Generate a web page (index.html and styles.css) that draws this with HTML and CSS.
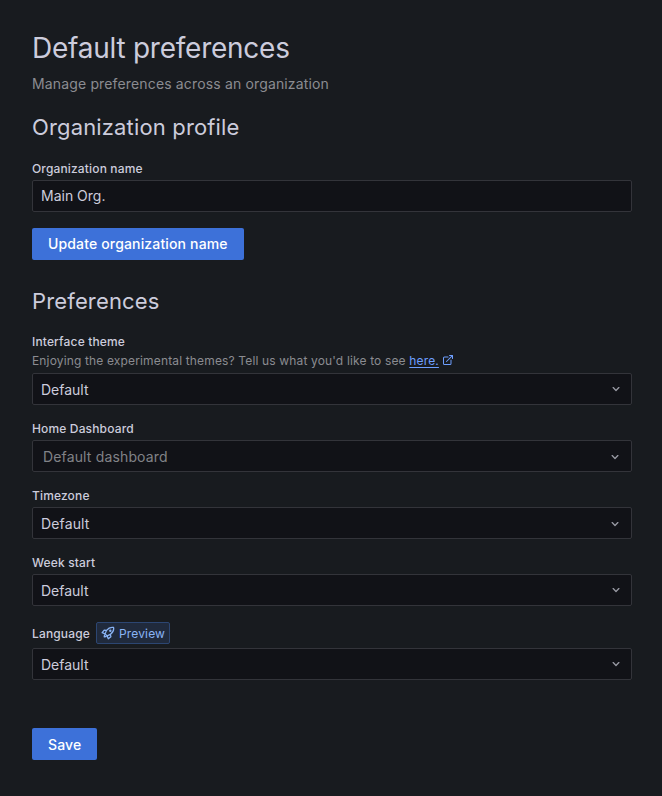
FILE: index.html
```html
<!DOCTYPE html>
<html lang="en">
<head>
<meta charset="utf-8">
<title>Default preferences</title>
<link rel="stylesheet" href="styles.css">
</head>
<body>
<main class="page">
  <h1 class="title">Default preferences</h1>
  <p class="subtitle">Manage preferences across an organization</p>
  <section class="profile">
    <h2 class="heading">Organization profile</h2>
    <label class="label" for="org">Organization name</label>
    <input class="control input" id="org" type="text" value="Main Org.">
    <button class="button" type="button">Update organization name</button>
  </section>
  <section class="preferences">
    <h2 class="heading">Preferences</h2>
    <div class="field">
      <div class="label">Interface theme</div>
      <div class="description">Enjoying the experimental themes? Tell us what you'd like to see <a class="link" href="#">here.</a><svg class="external" viewBox="0 0 24 24"><path d="M18 10.82a1 1 0 0 0-1 1V19a1 1 0 0 1-1 1H5a1 1 0 0 1-1-1V8a1 1 0 0 1 1-1h7.18a1 1 0 0 0 0-2H5a3 3 0 0 0-3 3v11a3 3 0 0 0 3 3h11a3 3 0 0 0 3-3v-7.18a1 1 0 0 0-1-1Zm3.92-8.2a1 1 0 0 0-.54-.54A1 1 0 0 0 21 2h-6a1 1 0 0 0 0 2h3.59L8.29 14.29a1 1 0 0 0 1.42 1.42L20 5.41V9a1 1 0 0 0 2 0V3a1 1 0 0 0-.08-.38Z"/></svg></div>
      <div class="control select"><span>Default</span><svg class="chevron" viewBox="0 0 24 24"><path d="M17 9.17a1 1 0 0 0-1.41 0L12 12.71 8.46 9.17a1 1 0 0 0-1.41 1.42l4.24 4.24a1 1 0 0 0 1.42 0L17 10.59a1 1 0 0 0 0-1.42Z"/></svg></div>
    </div>
    <div class="field">
      <div class="label">Home Dashboard</div>
      <div class="control select picker placeholder"><span>Default dashboard</span><svg class="chevron" viewBox="0 0 24 24"><path d="M17 9.17a1 1 0 0 0-1.41 0L12 12.71 8.46 9.17a1 1 0 0 0-1.41 1.42l4.24 4.24a1 1 0 0 0 1.42 0L17 10.59a1 1 0 0 0 0-1.42Z"/></svg></div>
    </div>
    <div class="field">
      <div class="label">Timezone</div>
      <div class="control select picker"><span>Default</span><svg class="chevron" viewBox="0 0 24 24"><path d="M17 9.17a1 1 0 0 0-1.41 0L12 12.71 8.46 9.17a1 1 0 0 0-1.41 1.42l4.24 4.24a1 1 0 0 0 1.42 0L17 10.59a1 1 0 0 0 0-1.42Z"/></svg></div>
    </div>
    <div class="field">
      <div class="label">Week start</div>
      <div class="control select"><span>Default</span><svg class="chevron" viewBox="0 0 24 24"><path d="M17 9.17a1 1 0 0 0-1.41 0L12 12.71 8.46 9.17a1 1 0 0 0-1.41 1.42l4.24 4.24a1 1 0 0 0 1.42 0L17 10.59a1 1 0 0 0 0-1.42Z"/></svg></div>
    </div>
    <div class="field">
      <div class="label language">Language <span class="badge"><svg class="rocket" viewBox="0 0 24 24"><path d="M21.500 2.500C17 1.500 13 3 9.500 7.500L7 13.500L10.500 17L16 14.500C20.500 11 22.500 7 21.500 2.500ZM9.500 7.500L5.500 7L2 11.500L7 13.500M10.500 17L12.500 22L17 18.500L16 14.500M6 15.500L5.500 18.500L8.500 18"/><circle cx="16" cy="8" r="1"/></svg>Preview</span></div>
      <div class="control select"><span>Default</span><svg class="chevron" viewBox="0 0 24 24"><path d="M17 9.17a1 1 0 0 0-1.41 0L12 12.71 8.46 9.17a1 1 0 0 0-1.41 1.42l4.24 4.24a1 1 0 0 0 1.42 0L17 10.59a1 1 0 0 0 0-1.42Z"/></svg></div>
    </div>
    <button class="button save" type="button">Save</button>
  </section>
</main>
</body>
</html>
```
FILE: styles.css
```css
* { box-sizing: border-box; }
body {
  margin: 0;
  height: 796px;
  background: #181b1f;
  color: #ccccdc;
  font: 14px/22px Inter, sans-serif;
  letter-spacing: 0.15px;
}
.page { padding: 32px 30px 0 32px; }
.title { margin: 0 0 9px; font-size: 28px; font-weight: 400; line-height: 32px; letter-spacing: -0.25px; }
.subtitle { margin: 0; color: #8b8c91; line-height: 22px; letter-spacing: 0.15px; }
.heading { margin: 0; font-size: 22px; font-weight: 400; line-height: 24px; letter-spacing: 0.15px; }
.profile { padding-top: 20px; }
.profile .label { display: block; margin-top: 22px; }
.label { margin-bottom: 4px; font-size: 12px; font-weight: 500; line-height: 15px; letter-spacing: 0.15px; }
.control {
  width: 100%; height: 32px; padding: 0 8px; display: block;
  border: 1px solid #33343a; border-radius: 2px;
  background: #111217; color: #ccccdc;
  font: inherit; letter-spacing: 0;
}
.input { padding-bottom: 2px; }
.button {
  height: 32px; padding: 0 16px; border: 0; border-radius: 2px;
  background: #3d71d9; color: #fff; display: block;
  font: 500 14px/32px Inter, sans-serif; letter-spacing: 0.15px;
}
.profile .button { margin-top: 16px; }
.preferences { padding-top: 29px; }
.preferences .heading { margin-bottom: 21px; }
.field { margin-bottom: 16px; }
.description { margin-bottom: 4px; color: #8b8c91; font-size: 12px; line-height: 16px; letter-spacing: 0.15px; }
.link { color: #6e9fff; text-decoration: underline; text-underline-offset: 2px; }
.external { width: 12px; height: 12px; margin-left: 3px; fill: #6e9fff; vertical-align: -1px; }
.select { display: flex; align-items: center; justify-content: space-between; }
.select span { padding-top: 2px; }
.chevron { width: 16px; height: 16px; margin-right: -1px; fill: #9899a3; }
.picker { letter-spacing: 0.15px; }
.picker .chevron { margin: 2px 0 0; }
.placeholder { padding-left: 10px; color: #818287; }
.language { display: flex; align-items: center; gap: 6px; height: 22px; }
.badge {
  display: flex; align-items: center; gap: 4px; width: 74px; height: 22px; padding: 0 4px;
  border: 1px solid #2c4672; border-radius: 2px; background: #202a3c;
  color: #8ab4f5; font-weight: 400; white-space: nowrap;
}
.rocket { flex: none; width: 14px; height: 14px; fill: none; stroke: #8ab4f5; stroke-width: 2.2; stroke-linejoin: round; stroke-linecap: round; }
.save { margin-top: 48px; padding-top: 1px; }
```
